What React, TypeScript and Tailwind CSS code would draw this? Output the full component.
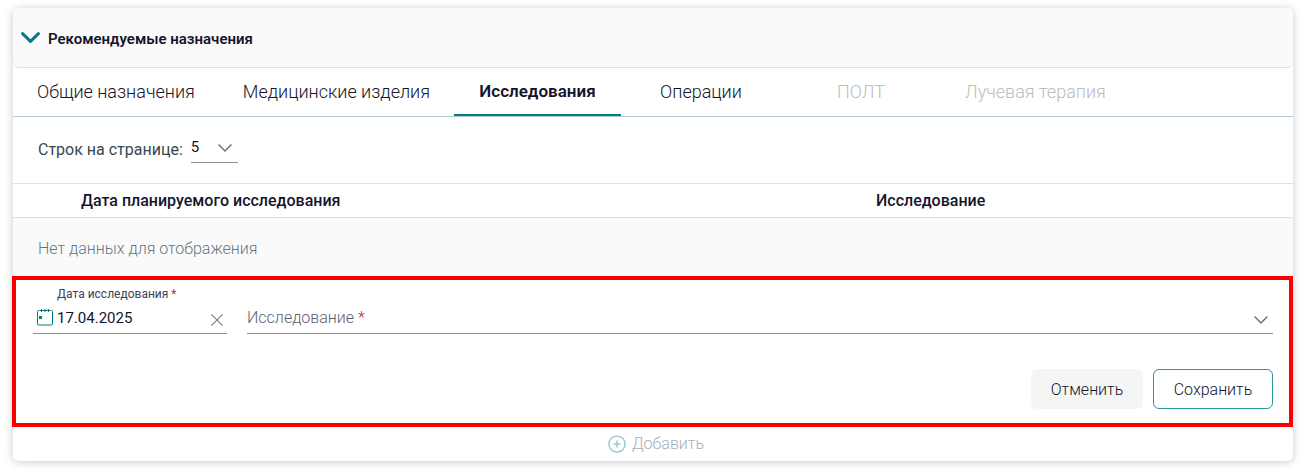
import { useState } from "react";
import clsx from "clsx";

const tabs = [
  { id: "general", label: "Общие назначения" },
  { id: "devices", label: "Медицинские изделия" },
  { id: "research", label: "Исследования" },
  { id: "operations", label: "Операции" },
  { id: "polt", label: "ПОЛТ", disabled: true },
  { id: "radiation", label: "Лучевая терапия", disabled: true },
];

const Chevron = ({ className }: { className?: string }) => (
  <svg
    className={className}
    width="14"
    height="8"
    viewBox="0 0 14 8"
    fill="none"
    stroke="currentColor"
    strokeWidth="1.4"
    aria-hidden="true"
  >
    <path d="M0.6 0.6 L7 7 L13.4 0.6" />
  </svg>
);

const CalendarIcon = () => (
  <svg
    width="16"
    height="17"
    viewBox="0 0 16 17"
    fill="none"
    stroke="#007c89"
    aria-hidden="true"
  >
    <path d="M2.5 1.5H1.5a1 1 0 0 0-1 1v12.5a1 1 0 0 0 1 1h13a1 1 0 0 0 1-1V2.5a1 1 0 0 0-1-1h-1" />
    <path d="M2.5 1.5h11M4.5 0v3M8 0v3M11.5 0v3" />
    <rect x="2" y="7" width="3" height="3" fill="#007c89" stroke="none" />
  </svg>
);

const ResearchForm = () => {
  const [date, setDate] = useState("17.04.2025");

  return (
    <form
      className="-ml-px border-4 border-[#ff0000] pt-1 pr-4 pb-3.5 pl-[17px]"
      onSubmit={(e) => e.preventDefault()}
    >
      <div className="flex gap-5">
        <div className="w-[194px] border-b border-[#8f8f8f]">
          <label
            htmlFor="research-date"
            className="block pl-6 text-xs leading-5 text-[#3c4257]"
          >
            Дата исследования <span className="text-[#c62828]">*</span>
          </label>
          <div className="flex h-[29px] items-center">
            <span className="w-6 pb-0.5 pl-1">
              <CalendarIcon />
            </span>
            <input
              id="research-date"
              type="text"
              value={date}
              onChange={(e) => setDate(e.target.value)}
              className="min-w-0 flex-1 text-[15px] text-[#14142b] outline-none"
            />
            <button
              type="button"
              aria-label="Очистить"
              className="px-1 pt-1 text-[#777b88]"
              onClick={() => setDate("")}
            >
              <svg
                width="12"
                height="12"
                viewBox="0 0 12 12"
                stroke="currentColor"
                strokeWidth="1.1"
              >
                <path d="M0.4 0.4 L11.6 11.6 M11.6 0.4 L0.4 11.6" />
              </svg>
            </button>
          </div>
        </div>
        <div className="relative flex flex-1 items-end border-b border-[#8f8f8f]">
          <label
            htmlFor="research-type"
            className="pointer-events-none absolute bottom-[3px] left-0 text-base leading-6 font-light text-[#5c6072]"
          >
            Исследование <span className="text-[#c62828]">*</span>
          </label>
          <select
            id="research-type"
            className="h-7 w-full appearance-none bg-transparent outline-none"
          >
            <option value=""></option>
          </select>
          <Chevron className="pointer-events-none absolute right-[5px] bottom-[9px] text-[#6b6f7d]" />
        </div>
      </div>
      <div className="mt-[35px] flex justify-end gap-2.5 text-base font-light text-[#14142b]">
        <button
          type="button"
          className="h-10 w-28 rounded-md bg-[#f4f6f6] pt-0.5"
        >
          Отменить
        </button>
        <button
          type="submit"
          className="h-10 w-[120px] rounded-md border border-[#2b949e] bg-white pt-0.5"
        >
          Сохранить
        </button>
      </div>
    </form>
  );
};

const App = () => {
  const [active, setActive] = useState("research");

  return (
    <main className="bg-white px-[13px] py-2 font-['Roboto',sans-serif]">
      <section className="rounded-md bg-white shadow-[0_1px_8px_rgba(55,90,100,0.3)]">
        <h2 className="rounded-md border-b border-[#dfe1e1] bg-[#fafafa]">
          <button
            type="button"
            aria-expanded="true"
            className="flex h-[59px] w-full items-center gap-2 pt-1 pl-2 text-[15px] font-semibold text-[#14142b]"
          >
            <svg
              className="mb-1"
              width="19"
              height="12"
              viewBox="0 0 19 12"
              fill="none"
              stroke="#007c89"
              strokeWidth="3"
              strokeLinecap="round"
              strokeLinejoin="round"
              aria-hidden="true"
            >
              <path d="M1.6 1.6 L9.5 9.4 L17.4 1.6" />
            </svg>
            Рекомендуемые назначения
          </button>
        </h2>

        <div role="tablist" className="flex h-[49px] border-b border-[#b3c6d3]">
          {tabs.map((tab) => (
            <button
              key={tab.id}
              type="button"
              role="tab"
              aria-selected={tab.id === active}
              disabled={tab.disabled}
              onClick={() => setActive(tab.id)}
              className={clsx(
                "border-b-2 px-6 pt-0.5",
                tab.id === active
                  ? "min-w-[167px] border-[#007c89] text-[17px] font-semibold"
                  : "min-w-40 border-transparent text-lg font-light",
                tab.disabled ? "text-[#bdbdbd]" : "text-[#14142b]"
              )}
            >
              {tab.label}
            </button>
          ))}
        </div>

        <div className="flex h-[66px] items-start gap-2 pt-[17px] pl-[25px] text-base">
          <label htmlFor="page-size" className="pt-1 leading-6 text-[#37474f]">
            Строк на странице:
          </label>
          <div className="relative w-[47px] border-b border-[#8f8f8f]">
            <select
              id="page-size"
              className="block h-7 w-full appearance-none bg-transparent pb-0.5 text-[15px] text-[#14142b] outline-none"
            >
              <option>5</option>
            </select>
            <Chevron className="pointer-events-none absolute top-2.5 right-1.5 text-[#6b6f7d]" />
          </div>
        </div>

        <table className="w-full table-fixed border-collapse">
          <thead>
            <tr className="h-[34px] border-y border-[#e0e0e0] text-left text-base text-[#14142b]">
              <th className="w-[58px]"></th>
              <th className="px-2.5 font-medium">
                Дата планируемого исследования
              </th>
              <th className="w-[369px] px-2.5 font-medium">Исследование</th>
              <th className="w-[58px]"></th>
            </tr>
          </thead>
          <tbody>
            <tr className="h-[58px] bg-[#fafafa] text-base font-light text-[#5f7884]">
              <td colSpan={4} className="pt-1 pl-[25px]">
                Нет данных для отображения
              </td>
            </tr>
          </tbody>
        </table>

        <ResearchForm />

        <button
          type="button"
          disabled
          className="flex h-[34px] w-full items-center justify-center gap-1.5 pl-1.5 text-base font-light text-[#a3b0b8]"
        >
          <svg
            width="18"
            height="18"
            viewBox="0 0 18 18"
            fill="none"
            stroke="#99cbd0"
            strokeWidth="1.5"
            aria-hidden="true"
          >
            <circle cx="9" cy="9" r="8.1" />
            <path d="M9 5.5v7M5.5 9h7" />
          </svg>
          Добавить
        </button>
      </section>
    </main>
  );
};

export default App;
